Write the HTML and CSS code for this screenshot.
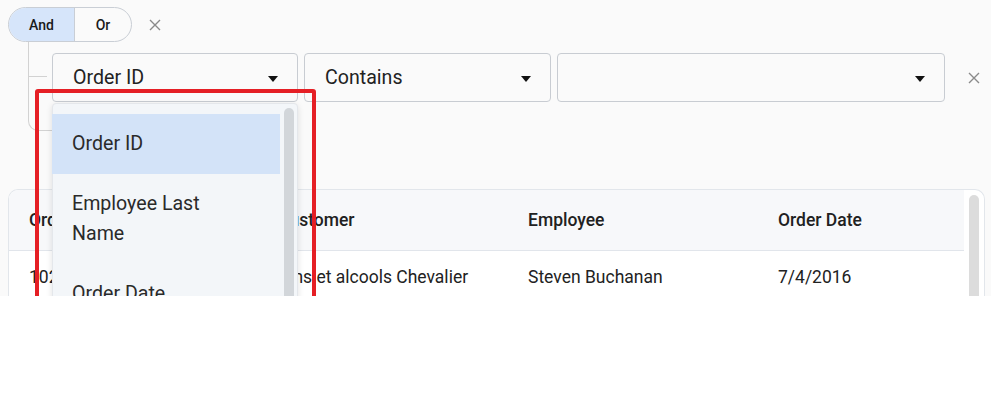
FILE: index.html
```html
<!DOCTYPE html>
<html>
<head>
<meta charset="utf-8">
<link rel="stylesheet" href="styles.css">
</head>
<body>
<div class="app">
  <div class="toolbar">
    <div class="seg">
      <button class="seg-btn active">And</button>
      <button class="seg-btn">Or</button>
    </div>
    <svg class="xicon" width="12" height="12" viewBox="0 0 12 12"><path d="M1 1L11 11M11 1L1 11" stroke="#8a8a8a" stroke-width="1.4" fill="none"/></svg>
  </div>
  <div class="group">
    <div class="rail"></div>
    <div class="conditions">
      <div class="select w1"><span>Order ID</span><i class="caret"></i></div>
      <div class="select w2"><span>Contains</span><i class="caret"></i></div>
      <div class="select w3"><span></span><i class="caret"></i></div>
      <svg class="xicon x2" width="12" height="12" viewBox="0 0 12 12"><path d="M1 1L11 11M11 1L1 11" stroke="#8a8a8a" stroke-width="1.4" fill="none"/></svg>
    </div>
  </div>
  <div class="card">
    <div class="table">
      <div class="row head">
        <div class="cell">Order ID</div>
        <div class="cell">Customer</div>
        <div class="cell">Employee</div>
        <div class="cell">Order Date</div>
      </div>
      <div class="row">
        <div class="cell">10248</div>
        <div class="cell">Vins et alcools Chevalier</div>
        <div class="cell">Steven Buchanan</div>
        <div class="cell">7/4/2016</div>
      </div>
    </div>
    <div class="vscroll"><div class="thumb"></div></div>
  </div>
  <div class="popup">
    <ul class="options">
      <li class="opt selected">Order ID</li>
      <li class="opt">Employee Last Name</li>
      <li class="opt">Order Date</li>
    </ul>
    <div class="pthumb"></div>
  </div>
  <div class="annot"></div>
</div>
</body>
</html>
```
FILE: styles.css
```css
* { box-sizing: border-box; }
html, body { margin: 0; padding: 0; background: #fff; }
body { font-family: Roboto, "Noto Sans", sans-serif; color: #212121; }
.app {
  position: relative;
  height: 296px;
  overflow: hidden;
  background: #fafafa;
  padding: 7px 6px 0 8px;
}
.toolbar { display: flex; align-items: center; height: 35px; }
.seg {
  display: flex;
  height: 35px;
  border: 1px solid #c9ced5;
  border-radius: 18px;
  overflow: hidden;
  background: #fafafa;
}
.seg-btn {
  font-family: Roboto, sans-serif;
  font-size: 14px;
  font-weight: 500;
  color: #1a1a1a;
  border: 0;
  background: transparent;
  padding: 0;
  height: 100%;
}
.seg-btn:first-child { width: 66px; background: #d6e5fa; border-right: 1px solid #c9ced5; }
.seg-btn:last-child { width: 56px; }
.xicon { margin-left: 17px; display: block; }
.group { display: flex; margin-left: 20px; }
.rail {
  position: relative;
  width: 24px;
  height: 89px;
  border-left: 1px solid #d2d2d2;
  border-bottom: 1px solid #d2d2d2;
  border-bottom-left-radius: 10px;
  flex: none;
}
.rail::before {
  content: "";
  position: absolute;
  left: 0;
  top: 34px;
  width: 18px;
  border-top: 1px solid #d2d2d2;
}
.conditions { display: flex; align-items: center; gap: 6px; padding-top: 11px; align-self: flex-start; height: 60px; }
.select {
  height: 49px;
  border: 1px solid #c8ccd2;
  border-radius: 4px;
  background: #fafafa;
  display: flex;
  align-items: center;
  justify-content: space-between;
  padding: 0 19px 0 20px;
  font-size: 19.6px;
  color: #222;
}
.w1 { width: 246px; }
.w2 { width: 247px; }
.w3 { width: 388px; }
.caret {
  width: 0; height: 0;
  border-left: 5.5px solid transparent;
  border-right: 5.5px solid transparent;
  border-top: 6px solid #111;
  margin-top: 2px;
}
.x2 { margin-left: 17px; }
.card {
  margin-top: 58px;
  display: flex;
  border: 1px solid #e2e6eb;
  border-bottom: 0;
  border-radius: 10px 10px 0 0;
  background: #fff;
  overflow: hidden;
  height: 200px;
}
.table { width: 956px; }
.row { display: grid; grid-template-columns: 249px 250px 250px 1fr; }
.row.head { background: #f7f8fa; height: 61px; border-bottom: 1px solid #e1e5eb; align-items: center; font-weight: 500; font-size: 17.5px; }
.row:not(.head) { height: 52px; align-items: center; font-size: 17.5px; color: #222; }
.cell { padding-left: 20px; white-space: nowrap; }
.vscroll { flex: 1; padding: 5px 5px 0 5px; }
.thumb { width: 10px; height: 200px; border-radius: 5px; background: #dcdcdc; }
.popup {
  position: absolute;
  left: 52px;
  top: 103px;
  width: 246px;
  height: 220px;
  background: #f3f6f9;
  border: 1px solid #e4e7eb;
  border-radius: 4px;
  box-shadow: 0 2px 6px rgba(0,0,0,0.12);
}
.options { list-style: none; margin: 0; padding: 10px 0 0 0; width: 227px; }
.opt { padding: 15px 40px 15px 20px; font-size: 19.6px; line-height: 30px; color: #2a2a2a; margin-left: -1px; }
.opt.selected { background: #d3e3f8; }
.pthumb {
  position: absolute;
  top: 4px;
  right: 3px;
  width: 10px;
  height: 240px;
  border-radius: 5px;
  background: #d2d6da;
}
.annot {
  position: absolute;
  left: 35px;
  top: 89px;
  width: 281px;
  height: 230px;
  border: 4px solid #e51f25;
  border-radius: 3px;
}
```
